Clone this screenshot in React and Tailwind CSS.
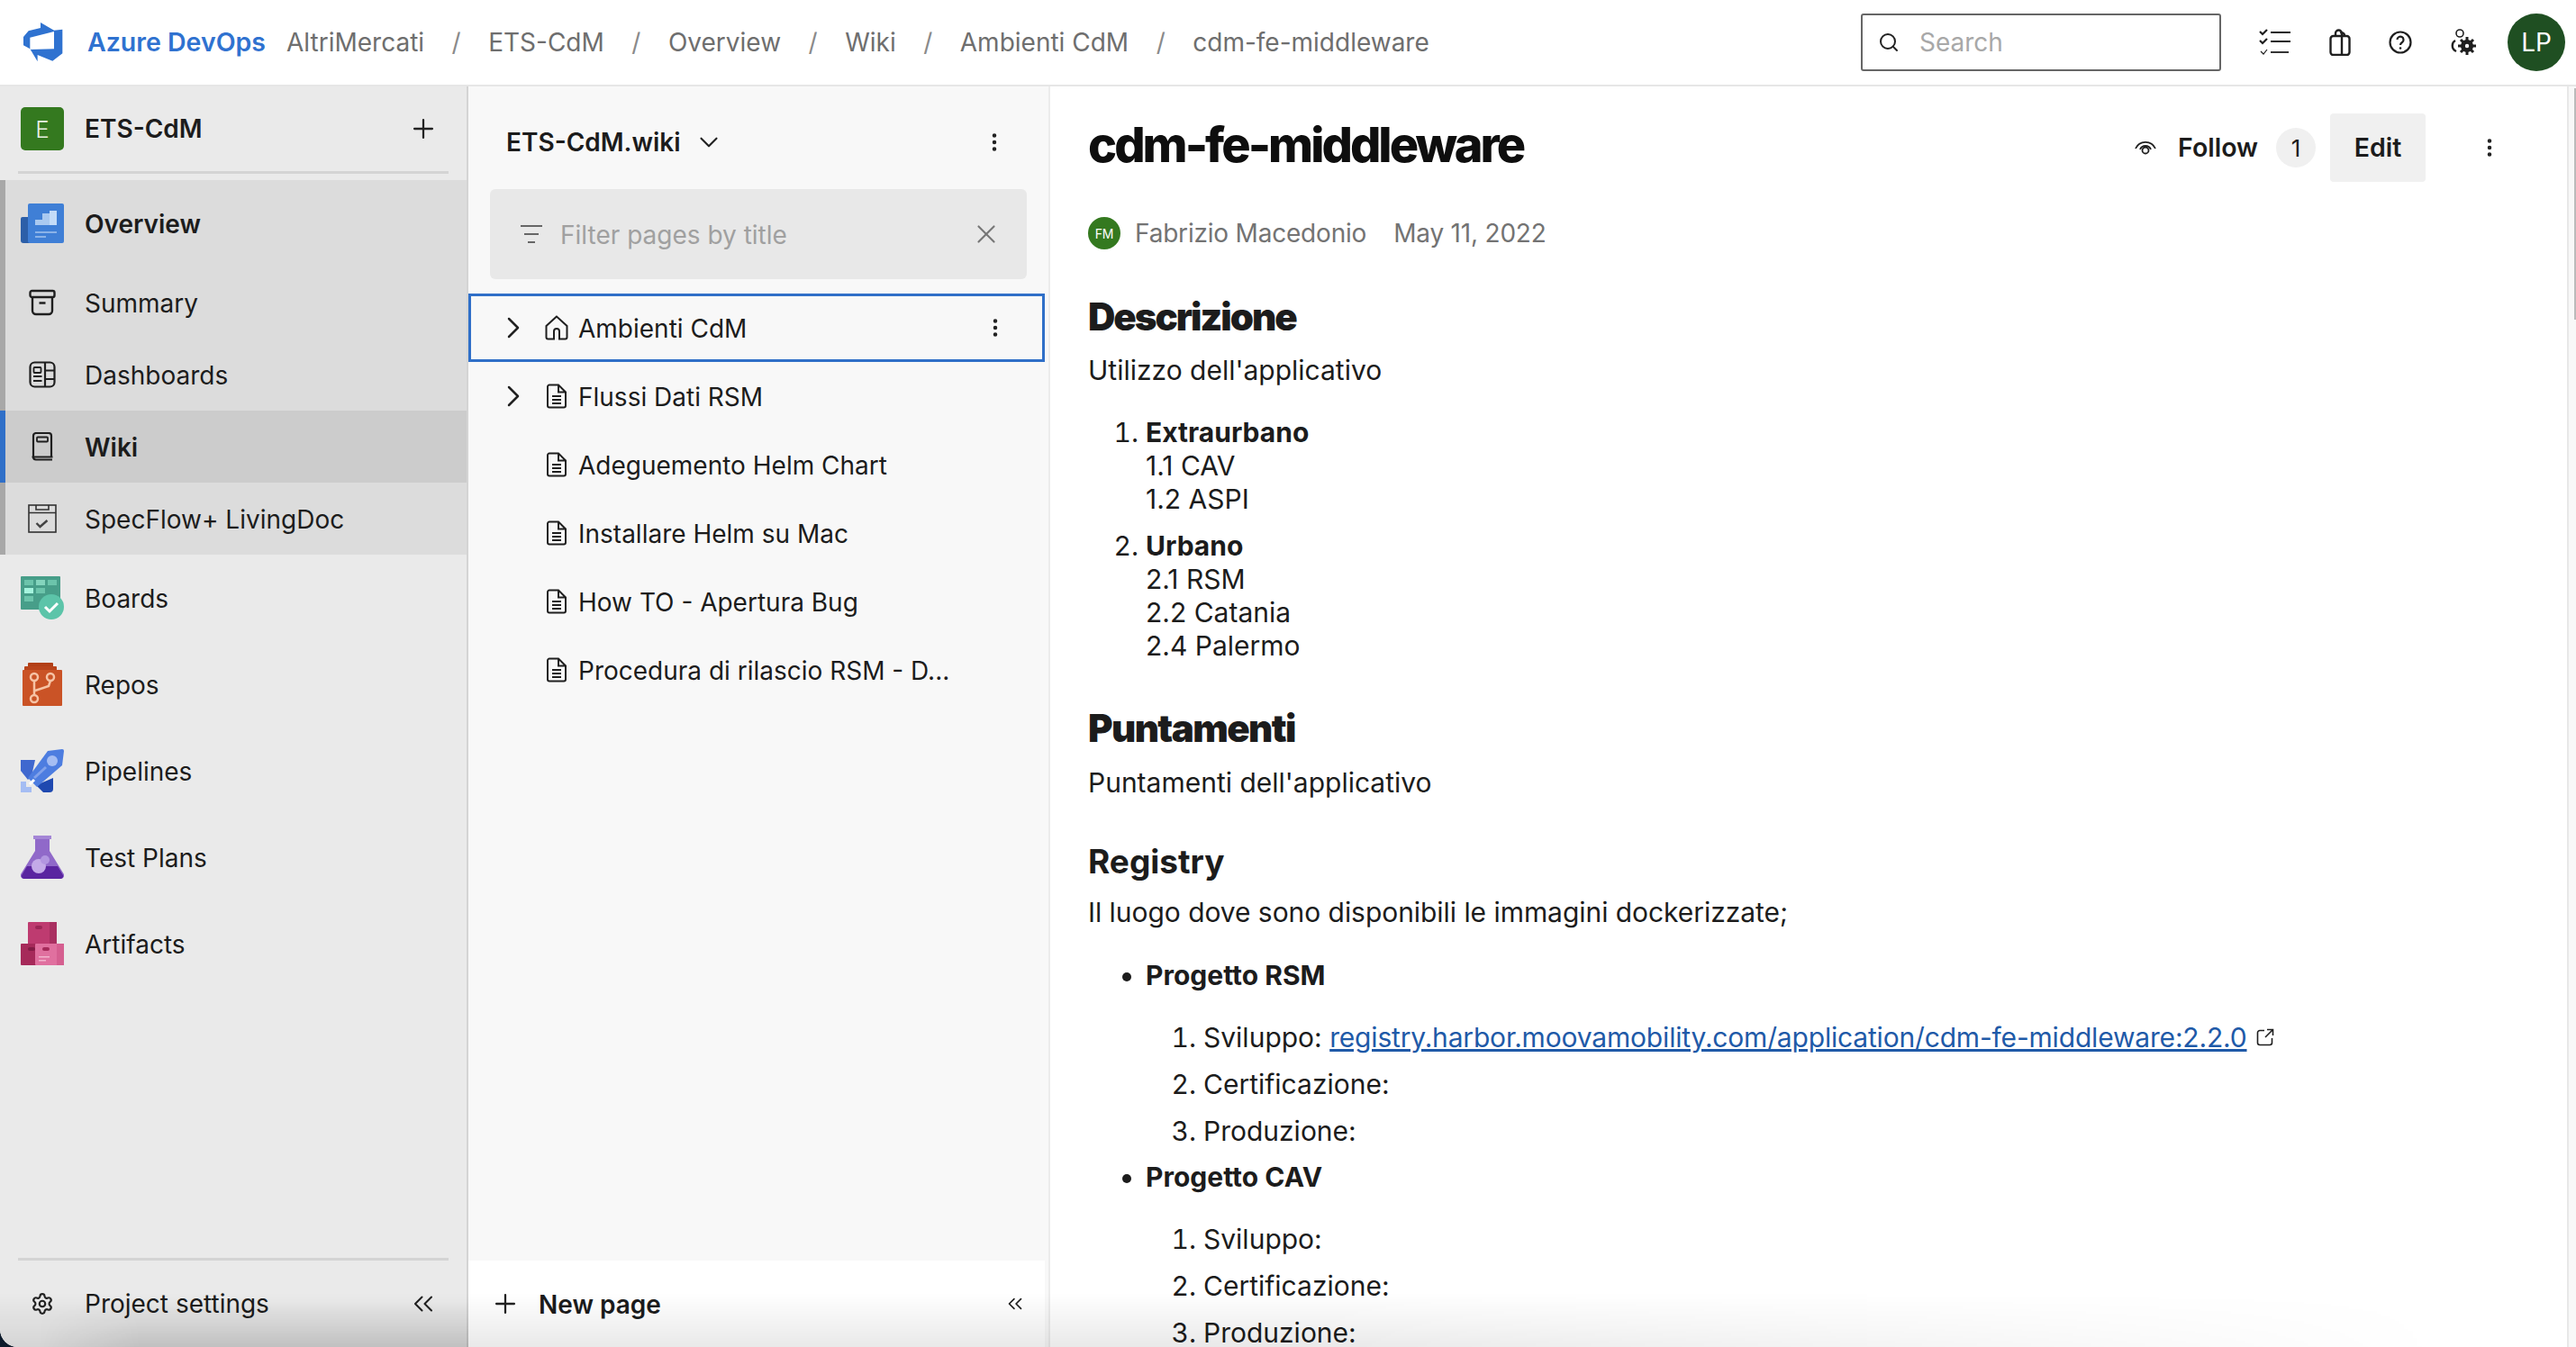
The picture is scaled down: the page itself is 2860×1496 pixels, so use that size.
import { ChevronDown, ChevronRight, ChevronsLeft, EllipsisVertical, Plus, Search, X, Settings } from "lucide-react";

const DevOpsLogo = () => (
    <svg width="44" height="44" viewBox="48 42 132 132" className="shrink-0">
        <path fill="#2f72d0" d="M48 90 L65 70 L105 60 L105 42 L150 68 L178 65 L178 145 L145 170 L95 150 L95 172 L70 130 L48 118 Z" />
        <path fill="#ffffff" d="M70 92 L150 72 L150 130 L70 132 Z" />
    </svg>
);

const OverviewIcon = () => (
    <svg width="48" height="44" viewBox="0 0 48 44">
        <path fill="#2c5fa8" d="M0 17a2 2 0 0 1 2-2h10v29H3a3 3 0 0 1-3-3Z" />
        <rect x="8" y="0" width="40" height="44" rx="2" fill="#3f7fd6" />
        <rect x="16" y="18" width="16" height="6" fill="#a9c9f0" />
        <rect x="24" y="11" width="8" height="13" fill="#a9c9f0" />
        <rect x="32" y="8" width="8" height="16" fill="#c4dcf8" />
        <rect x="16" y="31" width="24" height="2" fill="#8ab2e8" />
        <rect x="16" y="36" width="12" height="2" fill="#8ab2e8" />
    </svg>
);

const BoardsIcon = () => (
    <svg width="48" height="48" viewBox="0 0 48 48">
        <rect x="0" y="0" width="44" height="37" rx="1" fill="#479e89" />
        <rect x="4" y="4" width="10" height="6" fill="#6cc4ab" />
        <rect x="17" y="4" width="10" height="6" fill="#84d4bd" />
        <rect x="30" y="4" width="10" height="6" fill="#6cc4ab" />
        <rect x="4" y="13" width="10" height="6" fill="#a5f3dd" />
        <rect x="17" y="13" width="10" height="6" fill="#6cc4ab" />
        <rect x="4" y="22" width="10" height="6" fill="#6cc4ab" />
        <circle cx="34" cy="34" r="14" fill="#5cc4a9" />
        <path d="M27 34l5 5 9-9" stroke="#ffffff" strokeWidth="3" fill="none" />
    </svg>
);

const ReposIcon = () => (
    <svg width="48" height="48" viewBox="0 0 48 48">
        <rect x="8" y="0" width="28" height="6" rx="1" fill="#b23f17" />
        <rect x="4" y="4" width="36" height="8" rx="1" fill="#b9441b" />
        <rect x="2" y="8" width="44" height="40" rx="1" fill="#ca5326" />
        <g fill="none" stroke="#f6c3a5" strokeWidth="2.5">
            <circle cx="15" cy="16" r="4" />
            <circle cx="33" cy="16" r="4" />
            <circle cx="15" cy="40" r="4" />
            <path d="M15 20v16M16 31l15-5 2-6" />
        </g>
    </svg>
);

const PipelinesIcon = () => (
    <svg width="48" height="48" viewBox="0 0 48 48">
        <path fill="#3f68cf" d="M0 12h16L12 30 8 34 0 24Z" />
        <path fill="#1f49b0" d="M36 32v12a4 4 0 0 1-4 4h-7l-8-8Z" />
        <path fill="#4d7de0" d="M30 2 46 0a2 2 0 0 1 2 2l-2 16-28 24-10-10Z" />
        <circle cx="35" cy="13" r="6" fill="#a5bdf3" />
        <path d="M15 32 28 20" stroke="#82a2ea" strokeWidth="3" />
        <path fill="#a5bdf3" d="M0 36h6v6h6v6H0Z" />
        <path d="M10 39l5-5" stroke="#ffffff" strokeWidth="3" />
    </svg>
);

const TestPlansIcon = () => (
    <svg width="48" height="48" viewBox="0 0 48 48">
        <rect x="14" y="0" width="20" height="4" fill="#a486d6" />
        <path fill="#9069c9" d="M16 4h16v13l16 26a4 4 0 0 1-3 5H3a4 4 0 0 1-3-5l16-26Z" />
        <path fill="#5a25a0" d="M7 34h34l6 10a3 3 0 0 1-3 4H4a3 3 0 0 1-3-4Z" />
        <circle cx="20" cy="34" r="8" fill="#c3aae8" />
        <circle cx="27" cy="27" r="5" fill="#b296e0" />
    </svg>
);

const ArtifactsIcon = () => (
    <svg width="48" height="48" viewBox="0 0 48 48">
        <rect x="8" y="0" width="32" height="26" rx="1" fill="#be3b70" />
        <rect x="32" y="0" width="8" height="26" fill="#a93061" />
        <rect x="16" y="4" width="8" height="4" rx="2" fill="#9b2656" />
        <rect x="0" y="24" width="18" height="24" rx="1" fill="#a62a5a" />
        <rect x="16" y="24" width="32" height="24" rx="1" fill="#e0709f" />
        <rect x="40" y="24" width="8" height="24" fill="#d55f90" />
        <rect x="8" y="28" width="8" height="4" rx="2" fill="#821c45" />
        <rect x="24" y="28" width="8" height="4" rx="2" fill="#a62a5a" />
        <rect x="20" y="38" width="12" height="1.5" fill="#f2b3cd" />
        <rect x="20" y="42" width="8" height="1.5" fill="#f2b3cd" />
    </svg>
);

const SummaryIcon = () => (
    <svg width="30" height="30" viewBox="0 0 30 30" fill="none" stroke="#1f1f1f" strokeWidth="2.4">
        <rect x="1.5" y="2" width="27" height="7" rx="2" />
        <path d="M4 9v15a4 4 0 0 0 4 4h14a4 4 0 0 0 4-4V9M11.5 15.5h7" />
    </svg>
);

const DashboardsIcon = () => (
    <svg width="30" height="30" viewBox="0 0 30 30" fill="none" stroke="#1f1f1f" strokeWidth="2.2">
        <rect x="1.5" y="1.5" width="27" height="27" rx="5" />
        <path d="M18 1.5v27M18 10.5h10.5M18 20h10.5M5 17h9.5M5 22h9.5" />
        <rect x="5.5" y="7" width="8" height="6" rx="1" strokeWidth="1.8" />
    </svg>
);

const WikiIcon = () => (
    <svg width="26" height="32" viewBox="0 0 26 32" fill="none" stroke="#1f1f1f" strokeWidth="2.2">
        <path d="M3 27V4a3 3 0 0 1 3-3h14a3 3 0 0 1 3 3v23M1.5 27.5h23M3 27.5a3 3 0 0 0 3 3h18" />
        <rect x="7" y="5.5" width="12" height="5" rx="1" strokeWidth="1.8" />
    </svg>
);

const SpecFlowIcon = () => (
    <svg width="32" height="32" viewBox="0 0 32 32" fill="none" stroke="#333333" strokeWidth="1.6">
        <rect x="1" y="1" width="30" height="30" />
        <path d="M1 9.5h30M9 1v5h14V1" />
        <path d="M9.5 21l4 4 8-7" strokeWidth="2.4" stroke="#444444" />
    </svg>
);

const PageIcon = () => (
    <svg width="22" height="28" viewBox="0 0 22 28" fill="none" stroke="#1f1f1f" strokeWidth="2" className="shrink-0">
        <path d="M3 26.5a2 2 0 0 1-2-2V3.5a2 2 0 0 1 2-2h10l8 8v15a2 2 0 0 1-2 2ZM13 1.5v8h8" />
        <path d="M6 14h10M6 18h10M6 22h10" />
    </svg>
);

const HomeIcon = () => (
    <svg width="26" height="28" viewBox="0 0 26 28" fill="none" stroke="#1f1f1f" strokeWidth="2" className="shrink-0">
        <path d="M13 1.5 1.5 12v12.5a2 2 0 0 0 2 2H10V18a3 3 0 0 1 6 0v8.5h6.5a2 2 0 0 0 2-2V12Z" />
    </svg>
);

const ChecklistIcon = () => (
    <svg width="36" height="30" viewBox="0 0 36 30" fill="none" stroke="#1f1f1f">
        <path d="M1 3l3 3 5-5M1 13l3 3 5-5" strokeWidth="2.2" />
        <path d="M2 25l3 3 4-5" strokeWidth="1.2" />
        <path d="M13 4h22M13 14h22" strokeWidth="2.2" />
        <path d="M13 26h20" strokeWidth="1.8" />
    </svg>
);

const BagIcon = () => (
    <svg width="24" height="30" viewBox="0 0 24 30" fill="none" stroke="#1f1f1f" strokeWidth="2.4">
        <rect x="1.5" y="8" width="21" height="21" rx="3" />
        <path d="M7 8V5a3.5 3.5 0 0 1 7 0v24M12 4.5a3.5 3.5 0 0 1 5 3.5" />
    </svg>
);

const HelpIcon = () => (
    <svg width="26" height="26" viewBox="0 0 26 26" fill="none" stroke="#1f1f1f" strokeWidth="2.2">
        <circle cx="13" cy="13" r="11.5" />
        <path d="M9.5 10a3.5 3.5 0 1 1 5.5 3c-1.5 1-2 1.5-2 3" />
        <circle cx="13" cy="19.5" r="1.3" fill="#1f1f1f" stroke="none" />
    </svg>
);

const PersonGearIcon = () => (
    <svg width="30" height="30" viewBox="0 0 30 30" fill="none">
        <circle cx="11" cy="5" r="4" stroke="#1f1f1f" strokeWidth="1.6" />
        <path d="M6 13c-4 2-5 9 1 12" stroke="#1f1f1f" strokeWidth="2.4" />
        <circle cx="19" cy="19" r="7" fill="#1f1f1f" />
        <path d="M19 9v20M9 19h20M12 12l14 14M26 12 12 26" stroke="#1f1f1f" strokeWidth="3" />
        <circle cx="19" cy="19" r="2.2" fill="#ffffff" />
    </svg>
);

const EyeIcon = () => (
    <svg width="24" height="20" viewBox="0 0 24 20" fill="none" stroke="#1f1f1f" strokeWidth="1.8">
        <path d="M1 11a12 12 0 0 1 22 0" />
        <path d="M6 12a6.5 6.5 0 0 1 12 0" />
        <circle cx="12" cy="13" r="3.5" />
    </svg>
);

const FilterIcon = () => (
    <svg width="24" height="22" viewBox="0 0 24 22" fill="none" stroke="#666666" strokeWidth="2.2">
        <path d="M0 2h24M4 11h16M8 20h8" />
    </svg>
);

const ExternalIcon = () => (
    <svg width="20" height="20" viewBox="0 0 20 20" fill="none" stroke="#1f1f1f" strokeWidth="1.6" className="shrink-0">
        <path d="M9 2.5H4a2.5 2.5 0 0 0-2.5 2.5v11A2.5 2.5 0 0 0 4 18.5h11a2.5 2.5 0 0 0 2.5-2.5v-5" />
        <path d="M10 10l8-8M12 1.5h6.5V8" />
    </svg>
);

const projectNav = [
    { label: "Overview", icon: <OverviewIcon />, rowClass: "h-[96px] bg-[#dcdcdc]", bold: true, bar: "bg-[#a8a8a8]" },
    { label: "Summary", icon: <SummaryIcon />, rowClass: "h-[80px] bg-[#dcdcdc]", bar: "bg-[#a8a8a8]" },
    { label: "Dashboards", icon: <DashboardsIcon />, rowClass: "h-[80px] bg-[#dcdcdc]", bar: "bg-[#a8a8a8]" },
    { label: "Wiki", icon: <WikiIcon />, rowClass: "h-[80px] bg-[#cccccc]", bold: true, bar: "bg-[#2f6fc8]" },
    { label: "SpecFlow+ LivingDoc", icon: <SpecFlowIcon />, rowClass: "h-[80px] bg-[#dcdcdc]", bar: "bg-[#a8a8a8]" },
    { label: "Boards", icon: <BoardsIcon />, rowClass: "h-[96px]" },
    { label: "Repos", icon: <ReposIcon />, rowClass: "h-[96px]" },
    { label: "Pipelines", icon: <PipelinesIcon />, rowClass: "h-[96px]" },
    { label: "Test Plans", icon: <TestPlansIcon />, rowClass: "h-[96px]" },
    { label: "Artifacts", icon: <ArtifactsIcon />, rowClass: "h-[96px]" },
];

const crumbs = ["AltriMercati", "ETS-CdM", "Overview", "Wiki", "Ambienti CdM", "cdm-fe-middleware"];

const pages = [
    { label: "Ambienti CdM", expand: true, home: true, selected: true },
    { label: "Flussi Dati RSM", expand: true },
    { label: "Adeguemento Helm Chart" },
    { label: "Installare Helm su Mac" },
    { label: "How TO - Apertura Bug" },
    { label: "Procedura di rilascio RSM - D..." },
];

const Sidebar = () => (
    <aside className="w-[520px] shrink-0 flex flex-col bg-[#eaeaea] border-r-2 border-[#d4d4d4]">
        <div className="h-[104px] shrink-0 flex flex-col">
            <div className="h-[94px] flex items-center pl-[23px] pr-[31px]">
                <div className="w-[48px] h-[48px] rounded-[5px] bg-[#34791f] text-[#e8f0e4] text-[26px] font-light flex items-center justify-center">E</div>
                <span className="ml-[23px] text-[28px] font-semibold flex-1">ETS-CdM</span>
                <Plus size={34} strokeWidth={1.6} className="text-[#222222]" />
            </div>
            <div className="mx-[20px] h-[3px] bg-[#d4d4d4]" />
        </div>
        <nav className="flex flex-col">
            {projectNav.map((item) => (
                <div key={item.label} className={`relative flex items-center ${item.rowClass}`}>
                    {item.bar && <div className={`absolute left-0 top-0 bottom-0 w-[6px] ${item.bar}`} />}
                    <div className="w-[94px] shrink-0 flex justify-center">{item.icon}</div>
                    <span className={`pt-[2px] text-[28px] ${item.bold ? "font-semibold" : ""}`}>{item.label}</span>
                </div>
            ))}
        </nav>
        <div className="mt-auto mx-[20px] h-[3px] bg-[#d4d4d4]" />
        <div className="h-[96px] shrink-0 flex items-center pl-[34px] pr-[30px]">
            <Settings size={26} strokeWidth={2} className="text-[#222222]" />
            <span className="ml-[34px] text-[28px] flex-1">Project settings</span>
            <ChevronsLeft size={36} strokeWidth={1.4} className="text-[#222222]" />
        </div>
    </aside>
);

const WikiTree = () => (
    <section className="w-[646px] shrink-0 flex flex-col bg-[#f8f8f8] border-r-2 border-[#ececec]">
        <div className="h-[114px] pt-[10px] shrink-0 flex items-center pl-[42px] pr-[47px]">
            <span className="text-[28px] font-semibold">ETS-CdM.wiki</span>
            <ChevronDown size={34} strokeWidth={1.5} className="ml-[14px] text-[#222222]" />
            <EllipsisVertical size={26} strokeWidth={2.2} className="ml-auto text-[#222222]" />
        </div>
        <div className="mx-[24px] h-[100px] rounded-[6px] bg-[#e8e8e8] flex items-center pl-[34px] pr-[28px] shrink-0 w-[596px]">
            <FilterIcon />
            <span className="ml-[20px] pt-[2px] text-[28px] text-[#a0a0a0] flex-1">Filter pages by title</span>
            <X size={34} strokeWidth={1.5} className="text-[#777777]" />
        </div>
        <div className="mt-[16px] flex flex-col">
            {pages.map((page) => (
                <div
                    key={page.label}
                    className={`w-[640px] h-[76px] flex items-center ${page.selected ? "border-[3px] border-[#2f6fc8]" : ""}`}
                >
                    <div className={`flex items-center w-full ${page.selected ? "-ml-[3px]" : ""}`}>
                        <div className="w-[84px] shrink-0 pl-[30px]">
                            {page.expand && <ChevronRight size={40} strokeWidth={1.5} className="text-[#222222]" />}
                        </div>
                        <div className={`w-[38px] shrink-0 ${page.home ? "pl-[1px]" : "pl-[3px]"}`}>{page.home ? <HomeIcon /> : <PageIcon />}</div>
                        <span className="pt-[2px] text-[28px]">{page.label}</span>
                        {page.selected && <EllipsisVertical size={26} strokeWidth={2.2} className="ml-auto mr-[36px] text-[#222222]" />}
                    </div>
                </div>
            ))}
        </div>
        <div className="mt-auto h-[96px] shrink-0 bg-white flex items-center pl-[24px] pr-[20px] w-[640px]">
            <Plus size={34} strokeWidth={1.6} className="text-[#222222]" />
            <span className="ml-[20px] pt-[2px] text-[28px] font-semibold flex-1">New page</span>
            <ChevronsLeft size={26} strokeWidth={1.6} className="text-[#222222]" />
        </div>
    </section>
);

const Article = () => (
    <main className="flex-1 min-w-0 overflow-hidden bg-white pl-[42px] pr-[83px] text-[#1c1c1c]">
        <div className="h-[136px] flex items-center">
            <h1 className="-mt-[6px] text-[54px] font-extrabold tracking-[-3px] text-[#0e0e0e] leading-none">cdm-fe-middleware</h1>
            <div className="ml-auto flex items-center">
                <EyeIcon />
                <span className="ml-[24px] text-[28.5px] font-semibold">Follow</span>
                <span className="ml-[20px] w-[44px] h-[44px] rounded-full bg-[#f0f0f0] flex items-center justify-center text-[26px]">1</span>
                <span className="ml-[16px] w-[106px] h-[76px] rounded-[4px] bg-[#f0f0f0] flex items-center justify-center text-[28.5px] font-semibold">Edit</span>
                <EllipsisVertical size={26} strokeWidth={2.2} className="ml-[58px] text-[#222222]" />
            </div>
        </div>
        <div className="mt-[9px] h-[36px] flex items-center text-[28px] tracking-[-0.2px] text-[#737373]">
            <span className="w-[36px] h-[36px] rounded-full bg-[#34791f] text-white text-[14px] flex items-center justify-center">FM</span>
            <span className="ml-[16px]">Fabrizio Macedonio</span>
            <span className="ml-[30px]">May 11, 2022</span>
        </div>
        <h2 className="mt-[49px] text-[42px] leading-[52px] font-black tracking-[-2px]">Descrizione</h2>
        <p className="mt-[13px] text-[30px] leading-[40px]">Utilizzo dell'applicativo</p>
        <ol className="mt-[31px] text-[30px] leading-[37px] pl-[64px] list-decimal">
            <li>
                <b className="font-bold">Extraurbano</b>
                <div>1.1 CAV</div>
                <div>1.2 ASPI</div>
            </li>
            <li className="mt-[15px]">
                <b className="font-bold">Urbano</b>
                <div>2.1 RSM</div>
                <div>2.2 Catania</div>
                <div>2.4 Palermo</div>
            </li>
        </ol>
        <h2 className="mt-[47px] text-[42px] leading-[52px] font-black tracking-[-1.6px]">Puntamenti</h2>
        <p className="mt-[14px] text-[30px] leading-[40px]">Puntamenti dell'applicativo</p>
        <h3 className="mt-[45px] text-[37px] leading-[46px] font-bold">Registry</h3>
        <p className="mt-[13px] text-[30px] leading-[40px] tracking-[-0.05px]">Il luogo dove sono disponibili le immagini dockerizzate;</p>
        <ul className="mt-[30px] text-[30px] leading-[40px] pl-[64px] list-disc">
            <li>
                <b className="font-bold">Progetto RSM</b>
                <ol className="mt-[29px] pl-[64px] list-decimal">
                    <li className="h-[52px]">
                        <div className="flex items-center gap-[10px]">
                            <span>
                                Sviluppo:{" "}
                                <a className="text-[#1f5aa8] underline tracking-[-0.18px]">registry.harbor.moovamobility.com/application/cdm-fe-middleware:2.2.0</a>
                            </span>
                            <ExternalIcon />
                        </div>
                    </li>
                    <li className="h-[52px]">Certificazione:</li>
                    <li className="h-[52px]">Produzione:</li>
                </ol>
            </li>
            <li className="-mt-[1px]">
                <b className="font-bold">Progetto CAV</b>
                <ol className="mt-[29px] pl-[64px] list-decimal">
                    <li className="h-[52px]">Sviluppo:</li>
                    <li className="h-[52px]">Certificazione:</li>
                    <li className="h-[52px]">Produzione:</li>
                </ol>
            </li>
        </ul>
    </main>
);

const App = () => (
    <div className="w-[2860px] h-[1496px] overflow-hidden bg-[#0c1a2a]">
        <div className="relative w-full h-full overflow-hidden rounded-bl-[20px] bg-white flex flex-col text-[#1c1c1c] font-['Inter',sans-serif]">
            <header className="h-[96px] shrink-0 flex items-center bg-white border-b-2 border-[#e6e6e6] pl-[26px] pr-[12px]">
                <DevOpsLogo />
                <span className="ml-[27px] text-[28.5px] font-semibold text-[#2f72d0]">Azure DevOps</span>
                <nav className="ml-[23px] flex items-center text-[28px] text-[#6e6e6e]">
                    {crumbs.map((crumb, i) => (
                        <div key={crumb} className="flex items-center">
                            {i > 0 && <span className="px-[30.5px] text-[#8a8a8a]">/</span>}
                            <span>{crumb}</span>
                        </div>
                    ))}
                </nav>
                <div className="ml-auto w-[400px] h-[64px] border-2 border-[#666666] rounded-[3px] flex items-center pl-[17px]">
                    <Search size={24} strokeWidth={2} className="text-[#222222]" />
                    <span className="ml-[22px] text-[28px] text-[#a8a8a8]">Search</span>
                </div>
                <div className="ml-[42px] flex items-center gap-[42px]">
                    <ChecklistIcon />
                    <BagIcon />
                    <HelpIcon />
                    <PersonGearIcon />
                </div>
                <div className="ml-[34px] w-[64px] h-[64px] rounded-full bg-[#1f4f22] text-white text-[28px] flex items-center justify-center">LP</div>
            </header>
            <div className="flex-1 min-h-0 flex">
                <Sidebar />
                <WikiTree />
                <Article />
            </div>
            {/* shadow along the bottom edge, stronger on the left */}
            <div className="absolute left-0 right-0 bottom-0 h-[60px] pointer-events-none bg-gradient-to-b from-transparent to-[#00000016] [mask-image:linear-gradient(to_right,black_50%,transparent_95%)]" />
            <div className="absolute left-0 w-[520px] bottom-0 h-[50px] pointer-events-none bg-gradient-to-b from-transparent to-[#00000018] [mask-image:linear-gradient(to_right,transparent_8%,black_30%)]" />
            {/* scrollbar */}
            <div className="absolute right-0 top-[96px] bottom-0 w-[10px] bg-[#f8f8f8] border-l-2 border-[#e8e8e8]">
                <div className="ml-auto mt-[2px] w-[2px] h-[257px] bg-[#bbbbbb]" />
            </div>
        </div>
    </div>
);

export default App;
